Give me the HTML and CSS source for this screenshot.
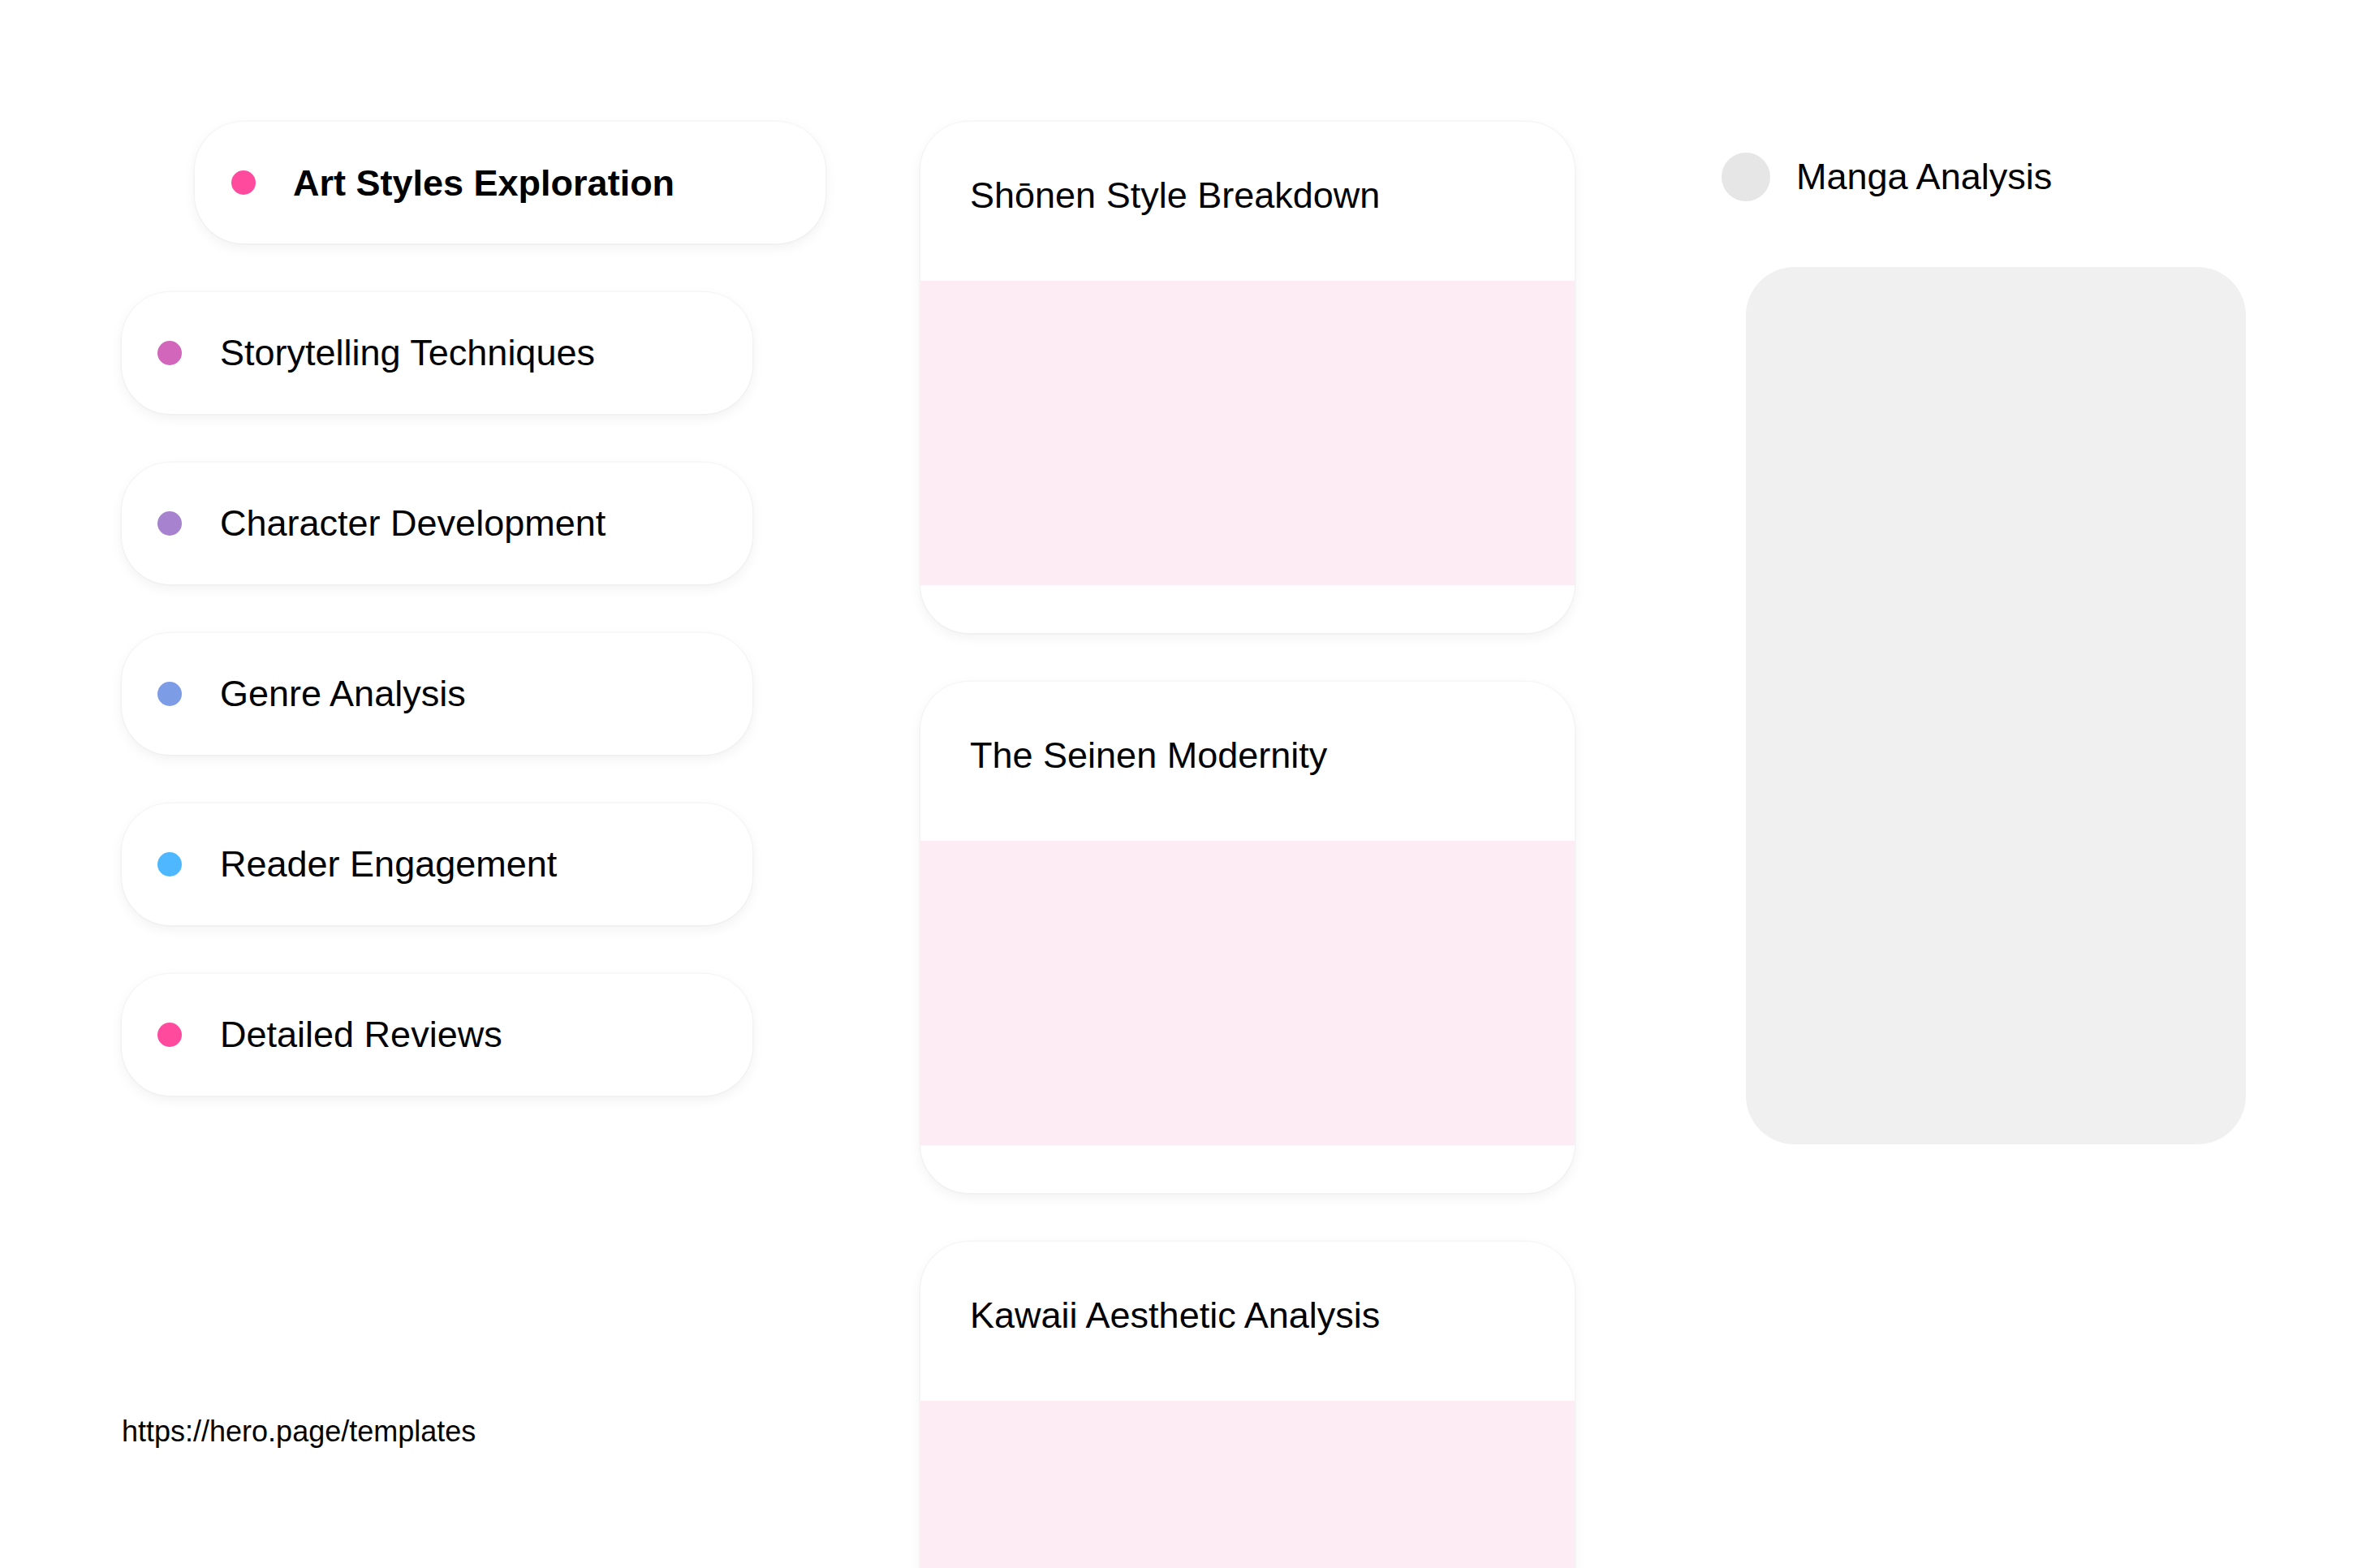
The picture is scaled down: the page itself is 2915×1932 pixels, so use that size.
FILE: index.html
```html
<!DOCTYPE html>
<html lang="en">
<head>
<meta charset="utf-8">
<title>Manga Analysis</title>
<link rel="stylesheet" href="styles.css">
</head>
<body>
<div class="page">
  <nav class="left">
    <ul class="topics">
      <li class="pill active"><span class="dot pink"></span><span class="label">Art Styles Exploration</span></li>
      <li class="pill"><span class="dot orchid"></span><span class="label">Storytelling Techniques</span></li>
      <li class="pill"><span class="dot lavender"></span><span class="label">Character Development</span></li>
      <li class="pill"><span class="dot periwinkle"></span><span class="label">Genre Analysis</span></li>
      <li class="pill"><span class="dot sky"></span><span class="label">Reader Engagement</span></li>
      <li class="pill"><span class="dot pink"></span><span class="label">Detailed Reviews</span></li>
    </ul>
    <div class="url">https://hero.page/templates</div>
  </nav>
  <main class="middle">
    <article class="card">
      <header class="card-head">Shōnen Style Breakdown</header>
      <div class="card-media"></div>
    </article>
    <article class="card">
      <header class="card-head">The Seinen Modernity</header>
      <div class="card-media"></div>
    </article>
    <article class="card">
      <header class="card-head">Kawaii Aesthetic Analysis</header>
      <div class="card-media"></div>
    </article>
  </main>
  <aside class="right">
    <div class="profile">
      <span class="avatar"></span>
      <span class="profile-name">Manga Analysis</span>
    </div>
    <div class="panel"></div>
  </aside>
</div>
</body>
</html>
```

FILE: styles.css
```css
html, body {
  margin: 0;
  padding: 0;
  background: #ffffff;
}

body {
  font-family: "Liberation Sans", Arial, sans-serif;
  color: #000000;
  overflow: hidden;
}

.page {
  display: flex;
  align-items: flex-start;
  padding: 150px 0 0 150px;
}

.left {
  width: 777px;
  flex: none;
  display: flex;
  flex-direction: column;
}

.topics {
  list-style: none;
  margin: 0;
  padding: 0;
  display: flex;
  flex-direction: column;
  gap: 60px;
}

.pill {
  box-sizing: border-box;
  width: 777px;
  height: 150px;
  border-radius: 60px;
  background: #ffffff;
  box-shadow: 0 0 0 1.5px rgba(0, 0, 0, 0.025), 0 5px 16px rgba(0, 0, 0, 0.06);
  display: flex;
  align-items: center;
  padding-left: 44px;
  gap: 47px;
  font-size: 45px;
}

.pill.active {
  margin-left: 90px;
  padding-left: 45px;
  gap: 46px;
  font-weight: bold;
}

.pill.active .label {
  position: relative;
  top: 1px;
}

.dot {
  width: 30px;
  height: 30px;
  border-radius: 50%;
  flex: none;
}

.dot.pink { background: #ff4a9e; }
.dot.orchid { background: #d166bb; }
.dot.lavender { background: #a682cf; }
.dot.periwinkle { background: #7d9ce6; }
.dot.sky { background: #4db8ff; }

.url {
  margin-top: 393px;
  font-size: 36px;
}

.middle {
  width: 806px;
  flex: none;
  margin-left: 207px;
  display: flex;
  flex-direction: column;
  gap: 60px;
}

.card {
  height: 630px;
  border-radius: 60px;
  background: #ffffff;
  overflow: hidden;
  box-shadow: 0 0 0 1.5px rgba(0, 0, 0, 0.025), 0 5px 16px rgba(0, 0, 0, 0.06);
  display: flex;
  flex-direction: column;
}

.card-head {
  box-sizing: border-box;
  height: 196px;
  padding: 65px 61px 0;
  font-size: 45px;
  flex: none;
}

.card-media {
  height: 375px;
  background: #fdecf4;
  flex: none;
}

.right {
  flex: none;
  margin-left: 181px;
  padding-top: 38px;
  display: flex;
  flex-direction: column;
}

.profile {
  display: flex;
  align-items: center;
  gap: 32px;
  height: 60px;
}

.avatar {
  width: 60px;
  height: 60px;
  border-radius: 50%;
  background: #e6e6e6;
  flex: none;
}

.profile-name {
  font-size: 45px;
}

.panel {
  margin-top: 81px;
  margin-left: 30px;
  width: 616px;
  height: 1081px;
  border-radius: 60px;
  background: #f0f0f0;
}
```
